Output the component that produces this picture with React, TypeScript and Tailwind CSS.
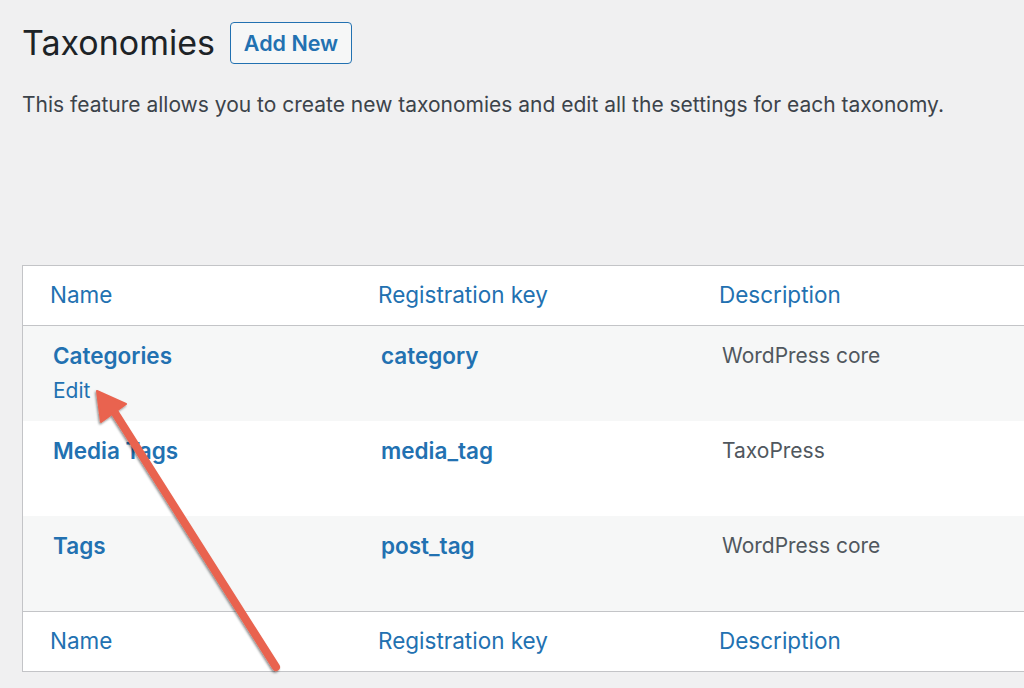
const rows = [
  { name: "Categories", key: "category", desc: "WordPress core", edit: true },
  { name: "Media Tags", key: "media_tag", desc: "TaxoPress", edit: false },
  { name: "Tags", key: "post_tag", desc: "WordPress core", edit: false },
];

const font = { fontFamily: "Inter, 'Liberation Sans', sans-serif" };

function HeaderRow({ top }: { top?: boolean }) {
  return (
    <div
      className={
        "flex h-[60px] items-center bg-white text-[22.5px] text-[#2271b1] " +
        (top ? "border-b border-[#c3c4c7]" : "border-t border-[#c3c4c7]")
      }
    >
      <div className="w-[355px] pl-[27px]">Name</div>
      <div className="w-[341px]">Registration key</div>
      <div>Description</div>
    </div>
  );
}

export default function App() {
  return (
    <div className="relative h-[688px] w-[1024px] overflow-hidden bg-[#f0f0f1]" style={font}>
      <div className="flex items-center pl-[22px] pt-[22px]">
        <h1 className="text-[34px] leading-[42px] text-[#1d2327]">Taxonomies</h1>
        <button className="ml-[15px] h-[42px] w-[122px] rounded-[4px] border-[1.5px] border-[#2271b1] bg-[#f6f7f7] text-[21.5px] font-semibold text-[#2271b1]">
          Add New
        </button>
      </div>
      <p className="mt-[25px] pl-[22px] text-[21px] text-[#3c434a]">
        This feature allows you to create new taxonomies and edit all the settings for each taxonomy.
      </p>

      <div className="ml-[22px] mt-[144px] w-[1040px] border border-[#c3c4c7] bg-white">
        <HeaderRow top />
        {rows.map((r, i) => (
          <div
            key={r.key}
            className={"flex h-[95px] pt-[16px] " + (i % 2 === 0 ? "bg-[#f6f7f7]" : "bg-white")}
          >
            <div className="w-[358px] pl-[30px]">
              <div className="text-[22.5px] font-semibold leading-[28px] text-[#2271b1]">{r.name}</div>
              {r.edit && <div className="mt-[10px] text-[21px] leading-[22px] text-[#2271b1]">Edit</div>}
            </div>
            <div className="w-[341px] text-[22.5px] font-semibold leading-[28px] text-[#2271b1]">{r.key}</div>
            <div className="text-[21px] leading-[28px] text-[#50575e]">{r.desc}</div>
          </div>
        ))}
        <HeaderRow />
      </div>

      <svg className="pointer-events-none absolute left-0 top-0" width="1024" height="688">
        <defs>
          <filter id="sh" x="-20%" y="-20%" width="140%" height="140%">
            <feDropShadow dx="-1" dy="1.5" stdDeviation="1.2" floodColor="#000" floodOpacity="0.45" />
          </filter>
        </defs>
        <g filter="url(#sh)" fill="#e9634f" stroke="#e9634f">
          <line x1="276" y1="667" x2="110" y2="405" strokeWidth="8" strokeLinecap="round" />
          <polygon points="97,391 126,404 101,422" strokeWidth="2" strokeLinejoin="round" />
        </g>
      </svg>
    </div>
  );
}
